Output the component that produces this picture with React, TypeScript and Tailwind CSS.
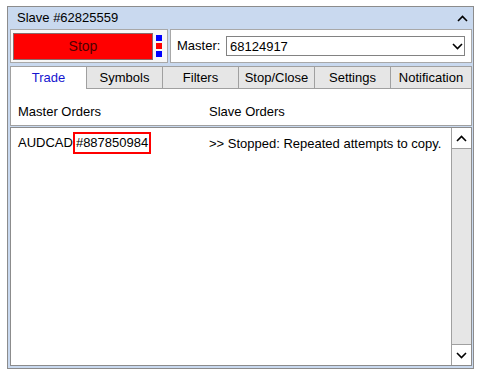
import React from "react";

// Copier panel: slave account view with tabbed order list.

const TABS = ["Trade", "Symbols", "Filters", "Stop/Close", "Settings", "Notification"];

function Chevron({ up = false, className = "" }: { up?: boolean; className?: string }) {
  return (
    <svg width="11" height="7" viewBox="0 0 11 7" className={className}>
      <polyline
        points={up ? "1,6 5.5,1.5 10,6" : "1,1 5.5,5.5 10,1"}
        fill="none"
        stroke="#000"
        strokeWidth="1.6"
      />
    </svg>
  );
}

function TitleBar() {
  return (
    <div className="flex h-[21px] items-center justify-between pl-[7px] pr-[4px]">
      <span className="leading-none">Slave #62825559</span>
      <Chevron up className="mt-[1px]" />
    </div>
  );
}

function ControlRow() {
  return (
    <div className="mt-[1px] flex h-[34px] gap-[2px]">
      <div className="flex w-[158px] items-center gap-[3px] border border-[#a8a8a8] bg-[#f7f7f7] pl-[2px]">
        <button
          type="button"
          className="flex h-[27px] w-[140px] items-center justify-center border border-[#8a6a6a] bg-[#ff0000] text-[14px] text-[#500000]"
        >
          Stop
        </button>
        <div className="flex flex-col gap-[2px]">
          <span className="h-[6px] w-[6px] bg-[#0000ff]" />
          <span className="h-[6px] w-[6px] bg-[#ff0000]" />
          <span className="h-[6px] w-[6px] bg-[#0000ff]" />
        </div>
      </div>
      <div className="flex flex-1 items-center border border-[#a8a8a8] bg-white pl-[6px] pr-[6px]">
        <span className="w-[49px]">Master:</span>
        <div className="flex h-[20px] flex-1 items-center justify-between border border-[#828282] pl-[3px] pr-[1px]">
          <span className="leading-none">68124917</span>
          <Chevron />
        </div>
      </div>
    </div>
  );
}

function Tabs() {
  return (
    <div className="mt-[3px] flex h-[23px]">
      {TABS.map((tab, i) => {
        const active = i === 0;
        const last = i === TABS.length - 1;
        return (
          <div
            key={tab}
            className={
              (last ? "flex-1 border-r " : "w-[76px] ") +
              (active
                ? "border-l border-t border-[#a0a0a0] border-b-0 bg-white text-[#1515d0] "
                : "border-l border-t border-b border-[#a0a0a0] bg-[#e6e6e6] text-black ") +
              "flex items-center justify-center"
            }
          >
            {tab}
          </div>
        );
      })}
    </div>
  );
}

function OrdersHeader() {
  return (
    <div className="flex h-[37px] border-x border-b border-[#a0a0a0] bg-white pl-[7px] pt-[15px] leading-[16px]">
      <span className="w-[191px]">Master Orders</span>
      <span>Slave Orders</span>
    </div>
  );
}

function OrdersList() {
  return (
    <div className="mt-[1px] flex flex-1 border border-[#8c8c8c] bg-white">
      <div className="flex flex-1 items-start pl-[7px] pt-[4px]">
        <div className="flex w-[191px] items-center">
          <span>AUDCAD</span>
          <span className="flex h-[22px] items-center border-2 border-[#ff0000] px-[1px]">#887850984</span>
        </div>
        <span className="mt-[2px]">&gt;&gt; Stopped: Repeated attempts to copy.</span>
      </div>
      <div className="flex w-[20px] flex-col border-l border-[#a0a0a0] bg-[#e6e6e6]">
        <div className="flex h-[21px] items-center justify-center border-b border-[#a0a0a0] bg-white">
          <Chevron up />
        </div>
        <div className="flex-1" />
        <div className="flex h-[21px] items-center justify-center border-t border-[#a0a0a0] bg-white">
          <Chevron />
        </div>
      </div>
    </div>
  );
}

export default function App() {
  return (
    <div className="h-[377px] w-[483px] bg-white pl-[7px] pt-[6px] font-['Liberation_Sans',Arial,sans-serif] text-[13px] text-black">
      <div className="flex h-[363px] w-[467px] flex-col border border-[#8c8c8c] bg-[#c9d9ef] pb-[2px] pl-[2px] pr-[1px]">
        <TitleBar />
        <ControlRow />
        <Tabs />
        <OrdersHeader />
        <OrdersList />
      </div>
    </div>
  );
}
